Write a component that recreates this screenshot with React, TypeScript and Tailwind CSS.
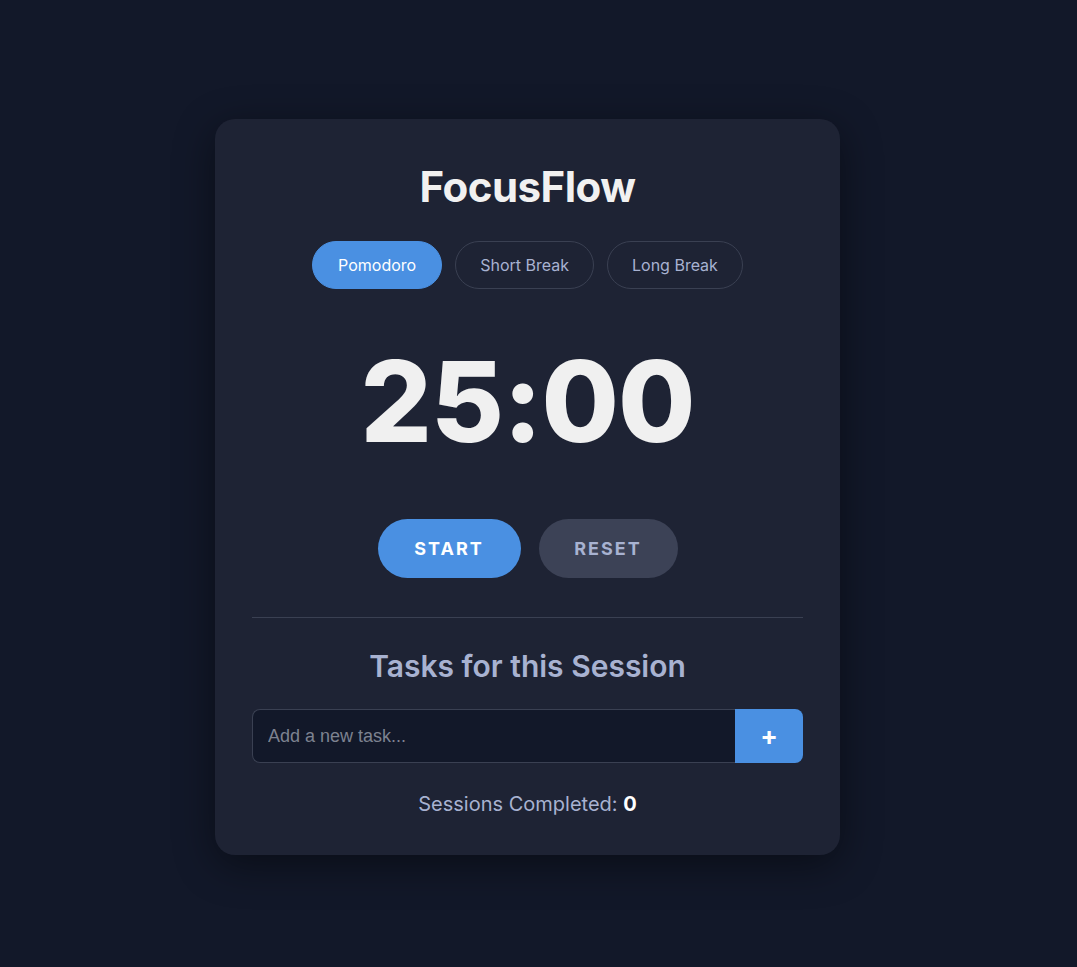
import React, { useState } from "react";

const modes = ["Pomodoro", "Short Break", "Long Break"];

const App = () => {
  const [mode, setMode] = useState("Pomodoro");
  const [task, setTask] = useState("");

  return (
    <div
      className="flex min-h-screen w-full items-center justify-center bg-[#121829] pr-[22px] pt-[7px]"
      style={{ fontFamily: "Inter, 'Noto Sans', sans-serif" }}
    >
      <div className="flex w-[625px] flex-col items-center rounded-[20px] bg-[#1e2334] px-[37px] pb-[38px] pt-[44px] shadow-[0_10px_40px_rgba(0,0,0,0.45)]">
        <h1 className="h-[48px] text-[42px] font-bold leading-[48px] tracking-[-0.5px] text-[#f1f1f1]">
          FocusFlow
        </h1>

        <div className="mt-[30px] flex gap-[13px]">
          {modes.map((m) => (
            <button
              key={m}
              onClick={() => setMode(m)}
              className={
                m === mode
                  ? "h-[48px] rounded-full border border-[#4a90e2] bg-[#4a90e2] px-[25px] text-[16px] text-white"
                  : "h-[48px] rounded-full border border-[#3a4052] px-[24px] text-[16px] text-[#a8b2d1]"
              }
            >
              {m}
            </button>
          ))}
        </div>

        <div className="mt-[37px] flex h-[150px] items-center justify-center text-[112px] font-extrabold leading-none tracking-[-1px] text-[#f0f0f0]">
          25:00
        </div>

        <div className="mt-[43px] flex gap-[18px]">
          <button className="h-[59px] w-[143px] rounded-full bg-[#4a90e2] text-[18px] font-bold tracking-[2px] text-white">
            START
          </button>
          <button className="h-[59px] w-[139px] rounded-full bg-[#3c4256] text-[18px] font-bold tracking-[2px] text-[#a8b2d1]">
            RESET
          </button>
        </div>

        <div className="mt-[39px] h-px w-full bg-[#3a4052]" />

        <h2 className="mt-[28px] h-[40px] text-[30px] font-semibold leading-[40px] text-[#a8b2d1]">
          Tasks for this Session
        </h2>

        <div className="mt-[23px] flex h-[54px] w-full">
          <input
            value={task}
            onChange={(e) => setTask(e.target.value)}
            placeholder="Add a new task..."
            className="h-full flex-1 rounded-l-[8px] border border-r-0 border-[#3a4052] bg-[#121829] px-[15px] text-[18px] text-[#e5e7eb] outline-none placeholder:text-[#7d8290]"
            style={{ fontFamily: "'Liberation Sans', Arial, sans-serif" }}
          />
          <button className="h-full w-[68px] rounded-r-[8px] bg-[#4a90e2] text-[26px] font-bold leading-none text-white">
            +
          </button>
        </div>

        <p className="mt-[28px] h-[26px] text-[20px] leading-[26px] text-[#a8b2d1]">
          Sessions Completed: <span className="font-bold text-white">0</span>
        </p>
      </div>
    </div>
  );
};

export default App;
